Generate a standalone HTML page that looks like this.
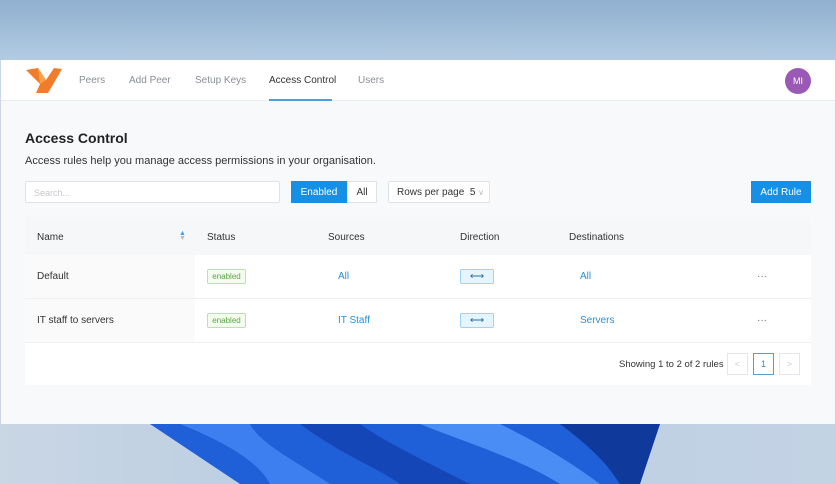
<!DOCTYPE html>
<html><head><style>
*{margin:0;padding:0;box-sizing:border-box}
body{width:836px;height:484px;overflow:hidden;position:relative;font-family:"Liberation Sans",sans-serif;background:linear-gradient(90deg,#c9d6e4 0%,#b9cde2 40%,#c3d3e4 100%)}
.top{position:absolute;left:0;top:0;width:836px;height:60px;background:linear-gradient(180deg,#8fb0cf 0%,#b3cbe2 100%)}
.win{position:absolute;left:1px;top:60px;width:834px;height:364px;background:#f8f9fb;overflow:hidden}
.nav{position:absolute;left:0;top:0;width:834px;height:41px;background:#fff;border-bottom:1px solid #e8eaee}
.nav span{position:absolute;top:15px;font-size:10px;color:#8a8f96}
.a{position:absolute}
.t{font-size:10px;color:#333}
.lnk{font-size:10px;color:#2a8fd6}
.c{display:flex;align-items:center;justify-content:center}
.badge{position:absolute;font-size:8px;color:#5aa84a;background:#f4fbef;border:1px solid #b9e3a8;border-radius:2px;width:39px;height:15px;display:flex;align-items:center;justify-content:center}
.dir{position:absolute;width:34px;height:15px;background:#e6f4fd;border:1px solid #9fd2f3;border-radius:2px;font-size:10px;color:#2a6ca0;display:flex;align-items:center;justify-content:center}
</style></head><body>
<div class="top"></div>
<svg class="a" style="left:0;top:424px" width="836" height="60">
<path d="M150 0 L660 0 L620 60 L240 60 Z" fill="#1f5fd8"/>
<path d="M180 0 C230 20 260 40 270 60 L330 60 C300 40 260 20 250 0Z" fill="#3d7ff0"/>
<path d="M300 0 C340 30 380 45 400 60 L470 60 C430 40 380 15 360 0Z" fill="#1546b8"/>
<path d="M420 0 C470 20 520 35 560 60 L600 60 C560 30 520 10 500 0Z" fill="#4a8df5"/>
<path d="M560 0 C600 30 610 45 620 60 L640 60 L660 0Z" fill="#0f3a9c"/>
</svg>
<div class="win">
 <div class="nav">
  <svg class="a" style="left:25px;top:8px" width="36" height="26" viewBox="0 0 36 26"><path d="M0 2 L12 0 L20 12 L28 0 L36 1 L22 25 L10 25 L14 16Z" fill="#f37c2b"/><path d="M12 0 L20 12 L14 16Z" fill="#f9a14b"/></svg>
  <span style="left:78px">Peers</span>
  <span style="left:128px">Add Peer</span>
  <span style="left:194px">Setup Keys</span>
  <span style="left:268px;color:#333">Access Control</span>
  <span style="left:357px">Users</span>
  <div class="a" style="left:268px;top:39px;width:63px;height:2px;background:#4aa0d8"></div>
  <div class="a c" style="left:784px;top:8px;width:26px;height:26px;border-radius:50%;background:#9b59b6;color:#fff;font-size:9px">MI</div>
 </div>
 <div class="a" style="left:24px;top:70px;font-size:14px;font-weight:bold;color:#222">Access Control</div>
 <div class="a" style="left:24px;top:95px;font-size:11px;color:#333">Access rules help you manage access permissions in your organisation.</div>
 <div class="a" style="left:24px;top:121px;width:255px;height:22px;background:#fff;border:1px solid #dfe3e8;border-radius:2px;font-size:9px;color:#c4c8cc;padding:6px 8px">Search...</div>
 <div class="a c" style="left:290px;top:121px;width:56px;height:22px;background:#1590e6;color:#fff;font-size:10px">Enabled</div>
 <div class="a c" style="left:346px;top:121px;width:30px;height:22px;background:#fff;border:1px solid #dfe3e8;color:#333;font-size:10px">All</div>
 <div class="a" style="left:387px;top:121px;width:102px;height:22px;background:#fff;border:1px solid #dfe3e8;border-radius:2px;color:#333;font-size:10px;display:flex;align-items:center;padding-left:8px">Rows per page&nbsp; 5&nbsp; <span style="color:#bbb;font-size:8px">&#8744;</span></div>
 <div class="a c" style="left:750px;top:121px;width:60px;height:22px;background:#1590e6;color:#fff;font-size:10px">Add Rule</div>
 <div class="a" style="left:24px;top:157px;width:786px;height:168px;background:#fff"></div>
 <div class="a" style="left:24px;top:157px;width:786px;height:38px;background:#f6f7f9"></div>
 <div class="a" style="left:24px;top:195px;width:170px;height:88px;background:#fafafa"></div>
 <div class="a" style="left:24px;top:238px;width:786px;height:1px;background:#eef0f2"></div>
 <div class="a" style="left:24px;top:282px;width:786px;height:1px;background:#eef0f2"></div>
 <div class="a t" style="left:36px;top:172px">Name</div>
 <div class="a" style="left:178px;top:171px;font-size:7px;color:#4a9fd8;line-height:5px">▲<br><span style="color:#bbb">▼</span></div>
 <div class="a t" style="left:206px;top:172px">Status</div>
 <div class="a t" style="left:327px;top:172px">Sources</div>
 <div class="a t" style="left:459px;top:172px">Direction</div>
 <div class="a t" style="left:568px;top:172px">Destinations</div>
 <div class="a t" style="left:36px;top:211px">Default</div>
 <div class="badge" style="left:206px;top:209px">enabled</div>
 <div class="a lnk" style="left:337px;top:211px">All</div>
 <div class="dir" style="left:459px;top:209px">⟷</div>
 <div class="a lnk" style="left:579px;top:211px">All</div>
 <div class="a t" style="left:756px;top:211px;color:#666">···</div>
 <div class="a t" style="left:36px;top:255px">IT staff to servers</div>
 <div class="badge" style="left:206px;top:253px">enabled</div>
 <div class="a lnk" style="left:337px;top:255px">IT Staff</div>
 <div class="dir" style="left:459px;top:253px">⟷</div>
 <div class="a lnk" style="left:579px;top:255px">Servers</div>
 <div class="a t" style="left:756px;top:255px;color:#666">···</div>
 <div class="a t" style="left:618px;top:299px;font-size:9.5px">Showing 1 to 2 of 2 rules</div>
 <div class="a c" style="left:726px;top:293px;width:21px;height:22px;border:1px solid #e3e6ea;color:#ccc;font-size:9px">&lt;</div>
 <div class="a c" style="left:752px;top:293px;width:21px;height:22px;border:1px solid #4aa0d8;color:#2a8fd6;font-size:9px">1</div>
 <div class="a c" style="left:778px;top:293px;width:21px;height:22px;border:1px solid #e3e6ea;color:#ccc;font-size:9px">&gt;</div>
</div>
</body></html>
